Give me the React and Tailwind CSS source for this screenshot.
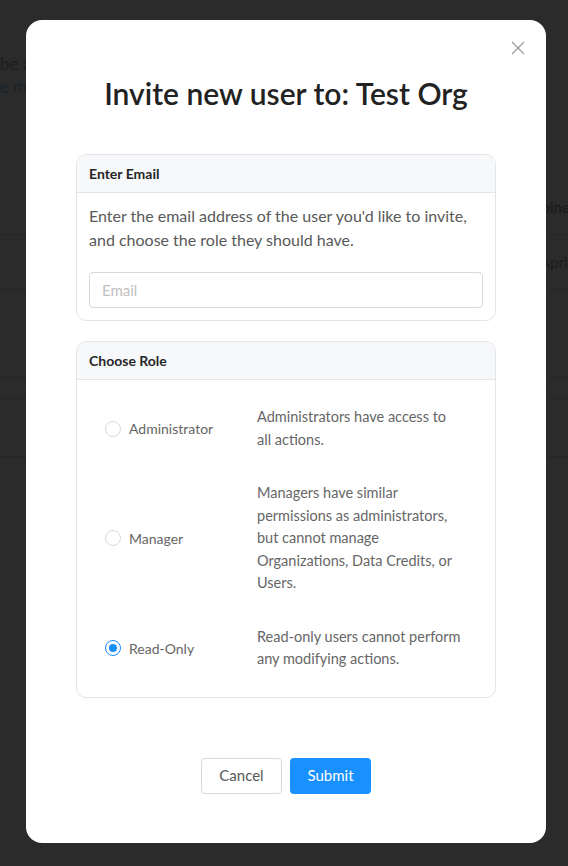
import React, { useState } from 'react';

const font = { fontFamily: 'Lato, "Open Sans", Arial, sans-serif' };

const roles = [
  {
    id: 'admin',
    label: 'Administrator',
    desc: 'Administrators have access to all actions.',
  },
  {
    id: 'manager',
    label: 'Manager',
    desc: 'Managers have similar permissions as administrators, but cannot manage Organizations, Data Credits, or Users.',
  },
  {
    id: 'read',
    label: 'Read-Only',
    desc: 'Read-only users cannot perform any modifying actions.',
  },
];

const Radio = ({ checked }) => (
  <span
    className={`flex h-4 w-4 shrink-0 items-center justify-center rounded-full border bg-white ${
      checked ? 'border-[#1890ff]' : 'border-[#d9d9d9]'
    }`}
  >
    {checked && <span className="h-2 w-2 rounded-full bg-[#1890ff]" />}
  </span>
);

const Card = ({ title, children, bodyClass }) => (
  <div className="overflow-hidden rounded-[10px] border border-[#e3e5e8]">
    <div className="flex h-[38px] items-center border-b border-[#e3e5e8] bg-[#f7f8fa] px-3 text-[14px] font-bold text-[#262626]">
      {title}
    </div>
    <div className={bodyClass}>{children}</div>
  </div>
);

// faint page behind the overlay
const Backdrop = () => (
  <div className="absolute inset-0 whitespace-nowrap text-[#1d1d1d]">
    <div className="pt-[52px] text-[17px] leading-[23px]">
      <p>be added to this organization</p>
      <p className="text-[#1c232b]">e more</p>
    </div>
    <div className="mt-[82px] flex flex-col">
      <div className="flex h-[55px] items-center border-b border-[#262626] pl-[535px] text-[15px] font-bold">Joined</div>
      <div className="flex h-[55px] items-center border-b border-[#262626] pl-[540px] text-[15px]">April 2020</div>
      <div className="h-[88px] border-b border-[#262626]" />
      <div className="h-[21px] border-b border-[#262626]" />
      <div className="h-[58px] border-b border-[#262626]" />
    </div>
  </div>
);

export default function App() {
  const [role, setRole] = useState('read');
  const [email, setEmail] = useState('');

  return (
    <div className="relative h-[866px] w-full overflow-hidden bg-[#2b2b2b]" style={font}>
      <Backdrop />

      <div className="absolute left-[26px] top-[20px] flex h-[823px] w-[520px] flex-col rounded-[16px] bg-white px-[50px] pt-[54px]">
        <button className="absolute right-[21px] top-[21px] text-[#9a9a9a]" aria-label="Close">
          <svg width="14" height="14" viewBox="0 0 14 14" fill="none" stroke="currentColor" strokeWidth="1.3">
            <path d="M1 1L13 13M13 1L1 13" />
          </svg>
        </button>

        <h1 className="text-center text-[30px] font-semibold leading-[38px] text-[#222]">
          Invite new user to: Test Org
        </h1>

        <div className="mt-[42px] flex flex-col gap-5">
          <Card title="Enter Email" bodyClass="px-3 pt-[11px] pb-3">
            <p className="text-[16px] leading-[24px] text-[#595959]">
              Enter the email address of the user you'd like to invite, and choose the role they should have.
            </p>
            <input
              value={email}
              onChange={(e) => setEmail(e.target.value)}
              placeholder="Email"
              className="mt-5 h-9 w-full rounded-[4px] border border-[#d9d9d9] px-3 text-[15px] text-[#333] outline-none placeholder:text-[#bfbfbf]"
            />
          </Card>

          <Card title="Choose Role" bodyClass="flex flex-col gap-[31px] px-3 pt-[26px] pb-[26px]">
            {roles.map((r) => (
              <label key={r.id} className="flex cursor-pointer items-center" onClick={() => setRole(r.id)}>
                <span className="flex w-[168px] items-center gap-2 pl-4 text-[14px] text-[#666]">
                  <Radio checked={role === r.id} />
                  {r.label}
                </span>
                <span className="w-[206px] text-[14.5px] leading-[22.5px] text-[#666]">{r.desc}</span>
              </label>
            ))}
          </Card>
        </div>

        <div className="mt-[60px] flex justify-center gap-2">
          <button className="h-9 w-[81px] rounded-[4px] border border-[#d9d9d9] bg-white text-[15px] text-[#595959]">
            Cancel
          </button>
          <button className="h-9 w-[81px] rounded-[4px] bg-[#1890ff] text-[15px] text-white">Submit</button>
        </div>
      </div>
    </div>
  );
}
